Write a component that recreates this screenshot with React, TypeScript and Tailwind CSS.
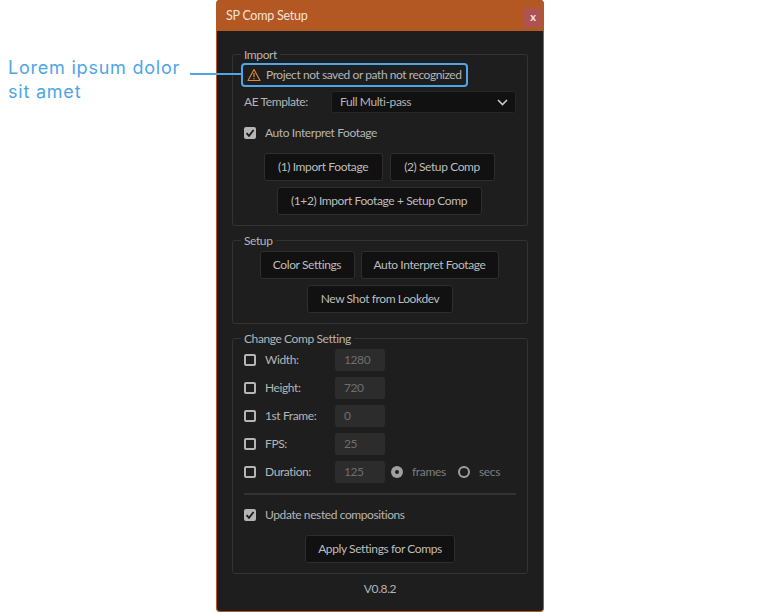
import React from "react";

const font = { fontFamily: 'Lato, "Open Sans", sans-serif' };

function Btn({ children, className = "" }: { children: React.ReactNode; className?: string }) {
  return (
    <div className={"h-[28px] flex items-center justify-center rounded-[3px] border border-[#2e2e2e] bg-[#111111] text-[12px] tracking-[-0.4px] text-[#bdbdbd] " + className}>
      {children}
    </div>
  );
}

function Check({ checked = false }: { checked?: boolean }) {
  return checked ? (
    <div className="w-[12px] h-[12px] rounded-[2px] bg-[#b5b5b5] flex items-center justify-center shrink-0">
      <svg width="10" height="10" viewBox="0 0 10 10" fill="none">
        <path d="M1.5 5.2 L4 7.8 L8.6 2" stroke="#1a1a1a" strokeWidth="1.8" />
      </svg>
    </div>
  ) : (
    <div className="w-[12px] h-[12px] rounded-[2px] border-2 border-[#b5b5b5] shrink-0" />
  );
}

function Box({ title, h, children }: { title: string; h: string; children: React.ReactNode }) {
  return (
    <div className={"relative rounded-[3px] border border-[#333333] " + h}>
      <div className="absolute left-[8px] -top-[7px] px-[3px] bg-[#1e1e1e] text-[12px] leading-[14px] tracking-[-0.4px] text-[#b5b5b5]">{title}</div>
      {children}
    </div>
  );
}

function Row({ label, value, children }: { label: string; value: string; children?: React.ReactNode }) {
  return (
    <div className="h-[22px] flex items-center">
      <Check />
      <div className="w-[79px] pl-[9px] text-[12px] tracking-[-0.4px] text-[#b5b5b5]">{label}</div>
      <div className="w-[50px] h-[22px] rounded-[3px] bg-[#2c2c2c] pl-[9px] flex items-center text-[12px] tracking-[-0.4px] text-[#6e6e6e]">{value}</div>
      {children}
    </div>
  );
}

function Radio({ on, label, w }: { on?: boolean; label: string; w: string }) {
  return (
    <div className={"flex items-center " + w}>
      {on ? (
        <div className="w-[12px] h-[12px] rounded-full bg-[#a0a0a0] flex items-center justify-center">
          <div className="w-[4px] h-[4px] rounded-full bg-[#1e1e1e]" />
        </div>
      ) : (
        <div className="w-[12px] h-[12px] rounded-full border-2 border-[#a0a0a0]" />
      )}
      <span className="ml-[9px] text-[12px] tracking-[-0.35px] text-[#7d7d7d]">{label}</span>
    </div>
  );
}

export default function App() {
  return (
    <div className="w-[760px] h-[612px] bg-white flex overflow-hidden" style={font}>
      <div className="relative z-10 w-[216px] shrink-0 pl-[8px] pt-[56px] text-[18px] leading-[24px] tracking-[0.78px] text-[#4ea6e6]" style={{ fontFamily: 'Inter, sans-serif' }}>
        <div>Lorem ipsum dolor</div>
        <div>sit amet</div>
        <div className="absolute left-[190px] top-[73px] w-[27px] h-[2px] bg-[#4ea6e6]" />
      </div>
      <div className="w-[328px] h-[612px] shrink-0 flex flex-col bg-[#1e1e1e] border-x border-b border-[#b45823] rounded-[4px] overflow-hidden">
        <div className="h-[31px] shrink-0 bg-[#b45823] flex items-center justify-between pl-[9px] pr-[1px]">
          <span className="mt-[1px] text-[12.5px] tracking-[-0.25px] text-[#f0e4dc]">SP Comp Setup</span>
          <div className="w-[18px] h-[19px] mt-[4px] pb-[2px] bg-[#ae5252] flex items-center justify-center text-[11px] font-bold leading-none text-[#f2e6e6]">x</div>
        </div>
        <div className="px-[15px] pt-[23px] flex flex-col">
          <Box title="Import" h="h-[172px]">
            <div className="relative flex flex-col px-[11px]">
              <div className="-ml-[3px] mt-[8px] w-[227px] h-[24px] rounded-[4px] border-2 border-[#4ea6e6] flex items-center pl-[3px] relative">
                <div className="absolute -left-[26px] top-[8px] w-[24px] h-[2px] bg-[#4ea6e6]" />
                <svg width="14" height="14" viewBox="0 0 14 14" fill="none" className="ml-[1px] shrink-0">
                  <path d="M7 1.5 L13 12.5 L1 12.5 Z" stroke="#e08a2a" strokeWidth="1.1" strokeLinejoin="round" />
                  <path d="M7 5 V9" stroke="#e08a2a" strokeWidth="1.2" />
                  <path d="M7 10 V11.2" stroke="#e08a2a" strokeWidth="1.2" />
                </svg>
                <span className="ml-[5px] whitespace-nowrap text-[12px] tracking-[-0.43px] text-[#b5b5b5]">Project not saved or path not recognized</span>
              </div>
              <div className="mt-[4px] h-[22px] flex items-center">
                <span className="w-[87px] text-[12px] tracking-[-0.4px] text-[#b5b5b5]">AE Template:</span>
                <div className="w-[185px] h-[22px] rounded-[3px] bg-[#111111] border border-[#262626] flex items-center justify-between pl-[8px] pr-[7px]">
                  <span className="text-[12px] tracking-[-0.4px] text-[#b5b5b5]">Full Multi-pass</span>
                  <svg width="11" height="7" viewBox="0 0 11 7" fill="none">
                    <path d="M1 1 L5.5 5.5 L10 1" stroke="#c8c8c8" strokeWidth="1.6" />
                  </svg>
                </div>
              </div>
              <div className="mt-[13px] h-[14px] flex items-center gap-[9px]">
                <Check checked />
                <span className="text-[12px] tracking-[-0.4px] text-[#b5b5b5]">Auto Interpret Footage</span>
              </div>
              <div className="mt-[13px] flex justify-center gap-[7px] -translate-x-[1px]">
                <Btn className="w-[119px]">(1) Import Footage</Btn>
                <Btn className="w-[105px]">(2) Setup Comp</Btn>
              </div>
              <div className="mt-[6px] flex justify-center -translate-x-[1px]">
                <Btn className="w-[205px]">(1+2) Import Footage + Setup Comp</Btn>
              </div>
            </div>
          </Box>
          <div className="h-[14px]" />
          <Box title="Setup" h="h-[84px]">
            <div className="pt-[10px] flex flex-col">
              <div className="flex justify-center gap-[6px] -translate-x-[1px]">
                <Btn className="w-[95px]">Color Settings</Btn>
                <Btn className="w-[138px]">Auto Interpret Footage</Btn>
              </div>
              <div className="mt-[6px] flex justify-center">
                <Btn className="w-[146px]">New Shot from Lookdev</Btn>
              </div>
            </div>
          </Box>
          <div className="h-[14px]" />
          <Box title="Change Comp Setting" h="h-[236px]">
            <div className="px-[11px] pt-[10px] flex flex-col gap-[6px]">
              <Row label="Width:" value="1280" />
              <Row label="Height:" value="720" />
              <Row label="1st Frame:" value="0" />
              <Row label="FPS:" value="25" />
              <Row label="Duration:" value="125">
                <div className="ml-[6px]" />
                <Radio on label="frames" w="w-[67px]" />
                <Radio label="secs" w="w-[50px]" />
              </Row>
              <div className="mt-[4px] h-[2px] bg-[#333333]" />
              <div className="mt-[7px] h-[14px] flex items-center gap-[9px]">
                <Check checked />
                <span className="text-[12px] tracking-[-0.4px] text-[#b5b5b5]">Update nested compositions</span>
              </div>
              <div className="mt-[7px] flex justify-center">
                <Btn className="w-[150px]">Apply Settings for Comps</Btn>
              </div>
            </div>
          </Box>
          <div className="mt-[7px] text-center text-[12px] leading-[16px] tracking-[-0.4px] text-[#b5b5b5]">V0.8.2</div>
        </div>
      </div>
      <div className="flex-1 bg-white" />
    </div>
  );
}
